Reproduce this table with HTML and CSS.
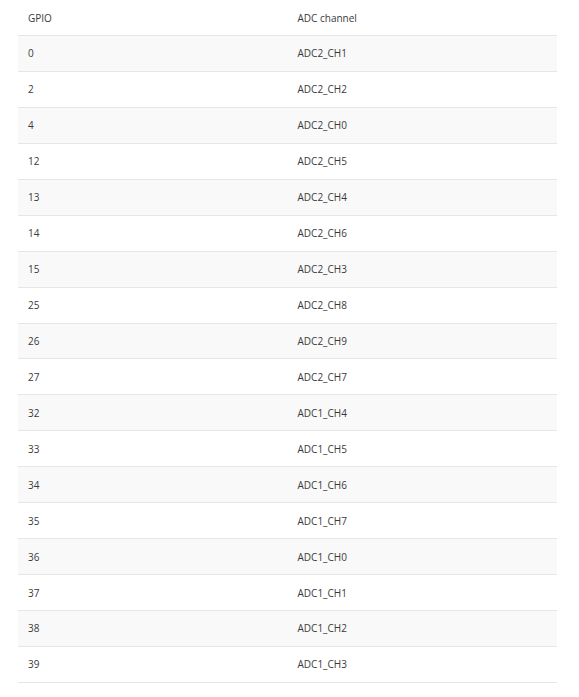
FILE: index.html
```html
<!DOCTYPE html>
<html>
<head>
<meta charset="utf-8">
<link rel="stylesheet" href="styles.css">
</head>
<body>
<table class="adc">
<thead>
<tr><th>GPIO</th><th>ADC channel</th></tr>
</thead>
<tbody>
<tr><td>0</td><td>ADC2_CH1</td></tr>
<tr><td>2</td><td>ADC2_CH2</td></tr>
<tr><td>4</td><td>ADC2_CH0</td></tr>
<tr><td>12</td><td>ADC2_CH5</td></tr>
<tr><td>13</td><td>ADC2_CH4</td></tr>
<tr><td>14</td><td>ADC2_CH6</td></tr>
<tr><td>15</td><td>ADC2_CH3</td></tr>
<tr><td>25</td><td>ADC2_CH8</td></tr>
<tr><td>26</td><td>ADC2_CH9</td></tr>
<tr><td>27</td><td>ADC2_CH7</td></tr>
<tr><td>32</td><td>ADC1_CH4</td></tr>
<tr><td>33</td><td>ADC1_CH5</td></tr>
<tr><td>34</td><td>ADC1_CH6</td></tr>
<tr><td>35</td><td>ADC1_CH7</td></tr>
<tr><td>36</td><td>ADC1_CH0</td></tr>
<tr><td>37</td><td>ADC1_CH1</td></tr>
<tr><td>38</td><td>ADC1_CH2</td></tr>
<tr><td>39</td><td>ADC1_CH3</td></tr>
</tbody>
</table>
</body>
</html>
```
FILE: styles.css
```css
html, body {
  margin: 0;
  padding: 0;
  background: #fff;
}
body {
  padding: 0 22px 0 18px;
  font-family: "Open Sans", "Noto Sans", sans-serif;
  font-size: 10px;
  color: #3a3a3a;
}
.adc {
  width: 539px;
  border-collapse: collapse;
  table-layout: fixed;
}
.adc th, .adc td {
  text-align: left;
  font-weight: normal;
  padding: 0 10px;
  border-bottom: 1px solid #e6e6e6;
  box-sizing: border-box;
  vertical-align: middle;
}
.adc th {
  height: 35.5px;
}
.adc td {
  height: 35.94px;
}
.adc tbody tr:nth-child(odd) {
  background: #f9f9f9;
}
```
